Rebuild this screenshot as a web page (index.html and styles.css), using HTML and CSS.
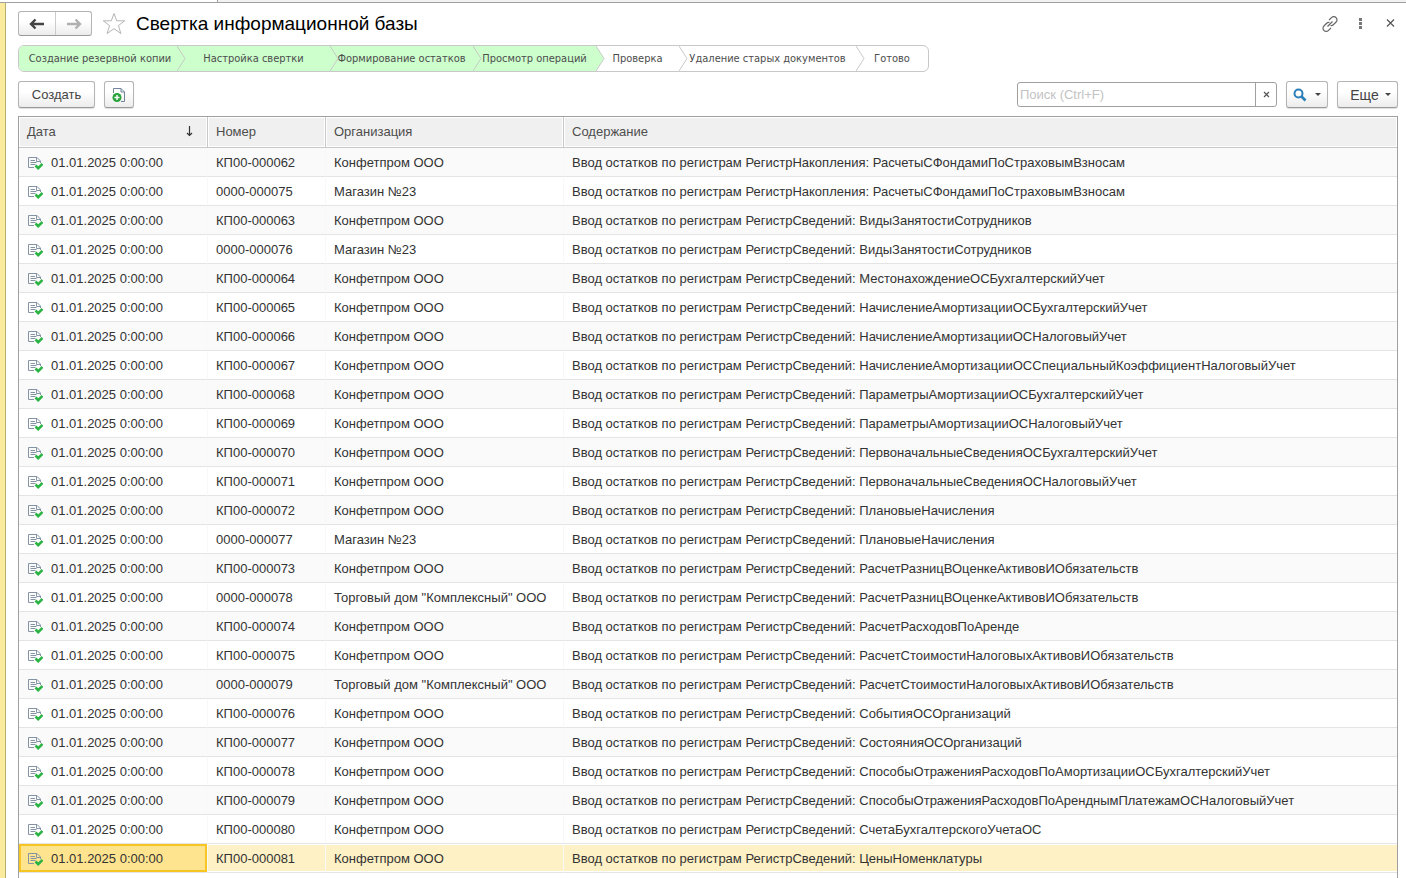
FILE: index.html
```html
<!DOCTYPE html>
<html lang="ru">
<head>
    <meta charset="UTF-8">
    <meta name="viewport" content="width=device-width, initial-scale=1.0">
    <title>Свертка информационной базы</title>
    <link rel="stylesheet" href="styles.css">
</head>
<body>
    <svg class="sprite" aria-hidden="true">
        <symbol id="doc" viewBox="0 0 16 14">
            <path d="M7 11.500H1.500v-10H10l3.500 3.500v2M9.500 1.500v4h4" fill="none" stroke="#8494a5"/>
            <path d="M3.500 4.500H8M3.500 6.500h6M3.500 8.500h5" stroke="#8494a5"/>
            <path d="M8.500 9.500l2.700 2.700L15.500 8" fill="none" stroke="#2bb344" stroke-width="2.600"/>
        </symbol>
        <symbol id="chevron" viewBox="0 0 9 25">
            <path d="M0 0L8 12.500L0 25"/>
        </symbol>
    </svg>

    <div class="tab-strip"><div class="tab-active"></div></div>

    <div class="window">
        <aside class="side-strip"></aside>

        <main>
            <header class="title-bar">
                <div class="history">
                    <button type="button" aria-label="Назад">
                        <svg width="16" height="12" viewBox="0 0 16 12"><path d="M2 6h13M6.500 1.500L2 6l4.500 4.500" fill="none" stroke="#444" stroke-width="2.400"/></svg>
                    </button>
                    <button type="button" aria-label="Вперед">
                        <svg width="16" height="12" viewBox="0 0 16 12"><path d="M1 6h13M9.500 1.500L14 6l-4.500 4.500" fill="none" stroke="#b0b0b0" stroke-width="2.400"/></svg>
                    </button>
                </div>
                <button type="button" class="plain" aria-label="В избранное">
                    <svg width="24" height="23" viewBox="0 0 24 23"><path d="M12 1.500l2.700 7.300h8l-6.300 4.800 2.500 7.900-6.900-4.800-6.900 4.800 2.500-7.900-6.300-4.800h8z" fill="#fff" stroke="#b4b4b4"/></svg>
                </button>
                <h1>Свертка информационной базы</h1>
                <div class="window-actions">
                    <button type="button" class="plain" aria-label="Ссылка">
                        <svg width="16" height="16" viewBox="0 0 16 16"><path d="M7 4l2.500-2.300a3 3 0 0 1 4.600 0 3 3 0 0 1 0 4.300l-2.800 2.700a3 3 0 0 1-2.800.8M9 12l-2.500 2.300a3 3 0 0 1-4.600 0 3 3 0 0 1 0-4.300l2.800-2.700a3 3 0 0 1 2.800-.8M5.500 10.500l5-5" fill="none" stroke="#666" stroke-width="1.200"/></svg>
                    </button>
                    <button type="button" class="plain" aria-label="Меню">
                        <svg width="16" height="16" viewBox="0 0 16 16"><path d="M7 2h3v3H7zM7 6h3v3H7zM7 10h3v3H7z" fill="#777"/></svg>
                    </button>
                    <button type="button" class="plain" aria-label="Закрыть">
                        <svg width="16" height="16" viewBox="0 0 16 16"><path d="M5 3.500l7 7M12 3.500l-7 7" stroke="#555" stroke-width="1.200"/></svg>
                    </button>
                </div>
            </header>

            <ol class="steps">
                <li class="done">Создание резервной копии<svg><use href="#chevron"/></svg></li>
                <li class="done">Настройка свертки<svg><use href="#chevron"/></svg></li>
                <li class="done">Формирование остатков<svg><use href="#chevron"/></svg></li>
                <li class="done">Просмотр операций<svg><use href="#chevron"/></svg></li>
                <li>Проверка<svg><use href="#chevron"/></svg></li>
                <li>Удаление старых документов<svg><use href="#chevron"/></svg></li>
                <li>Готово</li>
            </ol>

            <div class="toolbar">
                <button type="button" class="btn btn-create">Создать</button>
                <button type="button" class="btn btn-icon" aria-label="Создать копированием">
                    <svg width="14" height="16" viewBox="0 0 14 16">
                        <path d="M1.500 6V1.500h7.500l3.500 3.500v9.500H9M9 1.500V5h3.500" fill="none" stroke="#71849a"/>
                        <circle cx="5" cy="10.500" r="4.500" fill="#2ba33c"/>
                        <path d="M5 8v5M2.500 10.500h5" stroke="#fff" stroke-width="1.400"/>
                    </svg>
                </button>
                <div class="search">
                    <input type="text" placeholder="Поиск (Ctrl+F)" aria-label="Поиск">
                    <button type="button" aria-label="Очистить">
                        <svg width="7" height="7" viewBox="0 0 7 7"><path d="M1 1l5 5M6 1L1 6" stroke="#555" stroke-width="1.200"/></svg>
                    </button>
                </div>
                <button type="button" class="btn btn-find" aria-label="Найти">
                    <svg width="14" height="14" viewBox="0 0 14 14"><circle cx="5.500" cy="5.500" r="4" fill="none" stroke="#2c7fb8" stroke-width="2"/><path d="M8.500 8.500l4 4" stroke="#2c7fb8" stroke-width="2.600"/></svg>
                    <span class="caret"></span>
                </button>
                <button type="button" class="btn btn-more">Еще <span class="caret"></span></button>
            </div>

            <div class="list">
                <table>
                    <colgroup>
                        <col class="col-date">
                        <col class="col-number">
                        <col class="col-org">
                        <col>
                    </colgroup>
                    <thead>
                        <tr>
                            <th><div class="sorted">Дата <svg width="7" height="11" viewBox="0 0 7 11"><path d="M3.500 0v9M1 7l2.500 2.500L6 7" fill="none" stroke="#333" stroke-width="1.200"/></svg></div></th>
                            <th>Номер</th>
                            <th>Организация</th>
                            <th>Содержание</th>
                        </tr>
                    </thead>
                    <tbody>
                        <tr><td><svg class="doc"><use href="#doc"/></svg>01.01.2025 0:00:00</td><td>КП00-000062</td><td>Конфетпром ООО</td><td>Ввод остатков по регистрам РегистрНакопления: РасчетыСФондамиПоСтраховымВзносам</td></tr>
                        <tr><td><svg class="doc"><use href="#doc"/></svg>01.01.2025 0:00:00</td><td>0000-000075</td><td>Магазин №23</td><td>Ввод остатков по регистрам РегистрНакопления: РасчетыСФондамиПоСтраховымВзносам</td></tr>
                        <tr><td><svg class="doc"><use href="#doc"/></svg>01.01.2025 0:00:00</td><td>КП00-000063</td><td>Конфетпром ООО</td><td>Ввод остатков по регистрам РегистрСведений: ВидыЗанятостиСотрудников</td></tr>
                        <tr><td><svg class="doc"><use href="#doc"/></svg>01.01.2025 0:00:00</td><td>0000-000076</td><td>Магазин №23</td><td>Ввод остатков по регистрам РегистрСведений: ВидыЗанятостиСотрудников</td></tr>
                        <tr><td><svg class="doc"><use href="#doc"/></svg>01.01.2025 0:00:00</td><td>КП00-000064</td><td>Конфетпром ООО</td><td>Ввод остатков по регистрам РегистрСведений: МестонахождениеОСБухгалтерскийУчет</td></tr>
                        <tr><td><svg class="doc"><use href="#doc"/></svg>01.01.2025 0:00:00</td><td>КП00-000065</td><td>Конфетпром ООО</td><td>Ввод остатков по регистрам РегистрСведений: НачислениеАмортизацииОСБухгалтерскийУчет</td></tr>
                        <tr><td><svg class="doc"><use href="#doc"/></svg>01.01.2025 0:00:00</td><td>КП00-000066</td><td>Конфетпром ООО</td><td>Ввод остатков по регистрам РегистрСведений: НачислениеАмортизацииОСНалоговыйУчет</td></tr>
                        <tr><td><svg class="doc"><use href="#doc"/></svg>01.01.2025 0:00:00</td><td>КП00-000067</td><td>Конфетпром ООО</td><td>Ввод остатков по регистрам РегистрСведений: НачислениеАмортизацииОССпециальныйКоэффициентНалоговыйУчет</td></tr>
                        <tr><td><svg class="doc"><use href="#doc"/></svg>01.01.2025 0:00:00</td><td>КП00-000068</td><td>Конфетпром ООО</td><td>Ввод остатков по регистрам РегистрСведений: ПараметрыАмортизацииОСБухгалтерскийУчет</td></tr>
                        <tr><td><svg class="doc"><use href="#doc"/></svg>01.01.2025 0:00:00</td><td>КП00-000069</td><td>Конфетпром ООО</td><td>Ввод остатков по регистрам РегистрСведений: ПараметрыАмортизацииОСНалоговыйУчет</td></tr>
                        <tr><td><svg class="doc"><use href="#doc"/></svg>01.01.2025 0:00:00</td><td>КП00-000070</td><td>Конфетпром ООО</td><td>Ввод остатков по регистрам РегистрСведений: ПервоначальныеСведенияОСБухгалтерскийУчет</td></tr>
                        <tr><td><svg class="doc"><use href="#doc"/></svg>01.01.2025 0:00:00</td><td>КП00-000071</td><td>Конфетпром ООО</td><td>Ввод остатков по регистрам РегистрСведений: ПервоначальныеСведенияОСНалоговыйУчет</td></tr>
                        <tr><td><svg class="doc"><use href="#doc"/></svg>01.01.2025 0:00:00</td><td>КП00-000072</td><td>Конфетпром ООО</td><td>Ввод остатков по регистрам РегистрСведений: ПлановыеНачисления</td></tr>
                        <tr><td><svg class="doc"><use href="#doc"/></svg>01.01.2025 0:00:00</td><td>0000-000077</td><td>Магазин №23</td><td>Ввод остатков по регистрам РегистрСведений: ПлановыеНачисления</td></tr>
                        <tr><td><svg class="doc"><use href="#doc"/></svg>01.01.2025 0:00:00</td><td>КП00-000073</td><td>Конфетпром ООО</td><td>Ввод остатков по регистрам РегистрСведений: РасчетРазницВОценкеАктивовИОбязательств</td></tr>
                        <tr><td><svg class="doc"><use href="#doc"/></svg>01.01.2025 0:00:00</td><td>0000-000078</td><td>Торговый дом "Комплексный" ООО</td><td>Ввод остатков по регистрам РегистрСведений: РасчетРазницВОценкеАктивовИОбязательств</td></tr>
                        <tr><td><svg class="doc"><use href="#doc"/></svg>01.01.2025 0:00:00</td><td>КП00-000074</td><td>Конфетпром ООО</td><td>Ввод остатков по регистрам РегистрСведений: РасчетРасходовПоАренде</td></tr>
                        <tr><td><svg class="doc"><use href="#doc"/></svg>01.01.2025 0:00:00</td><td>КП00-000075</td><td>Конфетпром ООО</td><td>Ввод остатков по регистрам РегистрСведений: РасчетСтоимостиНалоговыхАктивовИОбязательств</td></tr>
                        <tr><td><svg class="doc"><use href="#doc"/></svg>01.01.2025 0:00:00</td><td>0000-000079</td><td>Торговый дом "Комплексный" ООО</td><td>Ввод остатков по регистрам РегистрСведений: РасчетСтоимостиНалоговыхАктивовИОбязательств</td></tr>
                        <tr><td><svg class="doc"><use href="#doc"/></svg>01.01.2025 0:00:00</td><td>КП00-000076</td><td>Конфетпром ООО</td><td>Ввод остатков по регистрам РегистрСведений: СобытияОСОрганизаций</td></tr>
                        <tr><td><svg class="doc"><use href="#doc"/></svg>01.01.2025 0:00:00</td><td>КП00-000077</td><td>Конфетпром ООО</td><td>Ввод остатков по регистрам РегистрСведений: СостоянияОСОрганизаций</td></tr>
                        <tr><td><svg class="doc"><use href="#doc"/></svg>01.01.2025 0:00:00</td><td>КП00-000078</td><td>Конфетпром ООО</td><td>Ввод остатков по регистрам РегистрСведений: СпособыОтраженияРасходовПоАмортизацииОСБухгалтерскийУчет</td></tr>
                        <tr><td><svg class="doc"><use href="#doc"/></svg>01.01.2025 0:00:00</td><td>КП00-000079</td><td>Конфетпром ООО</td><td>Ввод остатков по регистрам РегистрСведений: СпособыОтраженияРасходовПоАренднымПлатежамОСНалоговыйУчет</td></tr>
                        <tr><td><svg class="doc"><use href="#doc"/></svg>01.01.2025 0:00:00</td><td>КП00-000080</td><td>Конфетпром ООО</td><td>Ввод остатков по регистрам РегистрСведений: СчетаБухгалтерскогоУчетаОС</td></tr>
                        <tr class="selected"><td class="current"><svg class="doc"><use href="#doc"/></svg>01.01.2025 0:00:00</td><td>КП00-000081</td><td>Конфетпром ООО</td><td>Ввод остатков по регистрам РегистрСведений: ЦеныНоменклатуры</td></tr>
                    </tbody>
                </table>
            </div>
        </main>
    </div>
</body>
</html>
```

FILE: styles.css
```css
:root {
    --frame: #a0a0a0;
    --line: #c8c8c8;
    --text: #333;
    --done: #ccffcc;
    --yellow: #fbeb9e;
}

* {
    margin: 0;
    padding: 0;
    box-sizing: border-box;
}

body {
    height: 100vh;
    display: flex;
    flex-direction: column;
    overflow: hidden;
    background: #fff;
    color: var(--text);
    font-family: "Liberation Sans", Arial, sans-serif;
    font-size: 13px;
}

button,
input {
    font: inherit;
    color: inherit;
}

svg {
    flex: none;
}

.sprite {
    display: none;
}

.tab-strip {
    height: 3px;
    flex: none;
    background: #f2f2f2;
    border-bottom: 1px solid var(--frame);
}

.tab-active {
    width: 218px;
    height: 2px;
    background: #fff;
    border-right: 1px solid var(--frame);
}

.window {
    flex: 1;
    min-height: 0;
    display: flex;
}

.side-strip {
    width: 6px;
    flex: none;
    background: var(--yellow);
    border-right: 1px solid #b9ad70;
}

main {
    flex: 1;
    min-width: 0;
    display: flex;
    flex-direction: column;
    padding: 8px 8px 0 12px;
}

/* Title */
.title-bar {
    display: flex;
    align-items: center;
    height: 25px;
}

.history {
    display: flex;
    height: 25px;
    margin-right: 10px;
    border: 1px solid #b4b4b4;
    border-bottom-color: #999;
    border-radius: 3px;
    background: linear-gradient(#fff 40%, #ececec);
}

.history button {
    width: 36px;
    display: flex;
    align-items: center;
    justify-content: center;
    background: none;
    border: none;
}

.history button + button {
    border-left: 1px solid #ccc;
}

.plain {
    display: flex;
    background: none;
    border: none;
}

h1 {
    margin-left: 10px;
    font-size: 19px;
    font-weight: normal;
    color: #000;
}

.window-actions {
    display: flex;
    gap: 14px;
    margin-left: auto;
}

/* Wizard steps */
.steps {
    align-self: flex-start;
    display: flex;
    height: 27px;
    margin-top: 9px;
    border: 1px solid var(--line);
    border-radius: 6px;
    list-style: none;
    font-family: Tahoma, "DejaVu Sans Condensed", "Noto Sans", sans-serif;
    font-size: 11px;
    line-height: 25px;
    color: #4d4d4d;
    text-align: center;
    white-space: nowrap;
}

.steps li {
    position: relative;
    width: 158px;
}

.steps li:nth-child(2) { width: 153px; }
.steps li:nth-child(3) { width: 143px; }
.steps li:nth-child(4) { width: 123px; }
.steps li:nth-child(5) { width: 83px; }
.steps li:nth-child(6) { width: 177px; }
.steps li:nth-child(7) { width: 72px; }

.steps li:first-child {
    padding-left: 4px;
    border-radius: 5px 0 0 5px;
}

.steps svg {
    position: absolute;
    top: 0;
    right: -9px;
    z-index: 1;
    width: 9px;
    height: 25px;
    fill: #fff;
    stroke: var(--line);
}

.steps .done {
    background: var(--done);
}

.steps .done svg {
    fill: var(--done);
}

/* Toolbar */
.toolbar {
    display: flex;
    height: 27px;
    margin: 9px 0 8px;
}

.btn {
    display: flex;
    align-items: center;
    justify-content: center;
    border: 1px solid #b4b4b4;
    border-bottom-color: #999;
    border-radius: 3px;
    background: linear-gradient(#fff 40%, #ececec);
    box-shadow: 0 1px 1px #ddd;
    font-size: 13px;
    color: #444;
}

.btn-create {
    width: 77px;
}

.btn-icon {
    width: 30px;
    margin-left: 9px;
}

.search {
    display: flex;
    width: 260px;
    height: 25px;
    margin: 1px 9px 0 auto;
    border: 1px solid var(--frame);
    border-radius: 3px;
}

.search input {
    flex: 1;
    min-width: 0;
    padding: 0 2px;
    border: none;
    background: none;
}

.search input::placeholder {
    color: #c3c3c3;
}

.search button {
    width: 21px;
    display: flex;
    align-items: center;
    justify-content: center;
    background: none;
    border: none;
    border-left: 1px solid var(--frame);
}

.btn-find {
    width: 42px;
    gap: 8px;
    margin-right: 9px;
}

.btn-more {
    width: 61px;
    gap: 6px;
    padding-left: 6px;
    font-size: 14px;
}

.caret {
    border: 3px solid transparent;
    border-top-color: #444;
    border-bottom: none;
}

/* Document list */
.list {
    flex: 1;
    min-height: 0;
    overflow: hidden;
    border: 1px solid var(--frame);
    border-bottom: none;
}

table {
    width: 100%;
    table-layout: fixed;
    border-collapse: separate;
    border-spacing: 0;
}

.col-date { width: 189px; }
.col-number { width: 118px; }
.col-org { width: 238px; }

th,
td {
    padding: 0 8px;
    text-align: left;
    font-weight: normal;
    white-space: nowrap;
    overflow: hidden;
}

th {
    height: 31px;
    padding-bottom: 2px;
    border-right: 1px solid var(--line);
    border-bottom: 1px solid var(--line);
    background: #f0f0f0;
    box-shadow: inset 0 0 0 1px #fff;
    color: #4d4d4d;
}

th:last-child {
    border-right: none;
}

.sorted {
    display: flex;
    align-items: center;
    justify-content: space-between;
    padding-right: 6px;
}

td {
    height: 29px;
    border-right: 1px solid #f8f8f8;
    border-bottom: 1px solid #e4e4e4;
}

td:last-child {
    border-right: none;
}

tbody tr:nth-child(odd) {
    background: #fafafa;
}

.doc {
    width: 16px;
    height: 14px;
    margin-right: 8px;
    vertical-align: -3px;
}

tbody tr.selected {
    background: #fef1c5;
}

.selected td {
    box-shadow: inset 0 1px #fff, inset 0 -1px #fff;
}

.selected .current {
    background: #ffe48f;
    box-shadow: inset 0 0 0 2px #f8c623;
}
```
